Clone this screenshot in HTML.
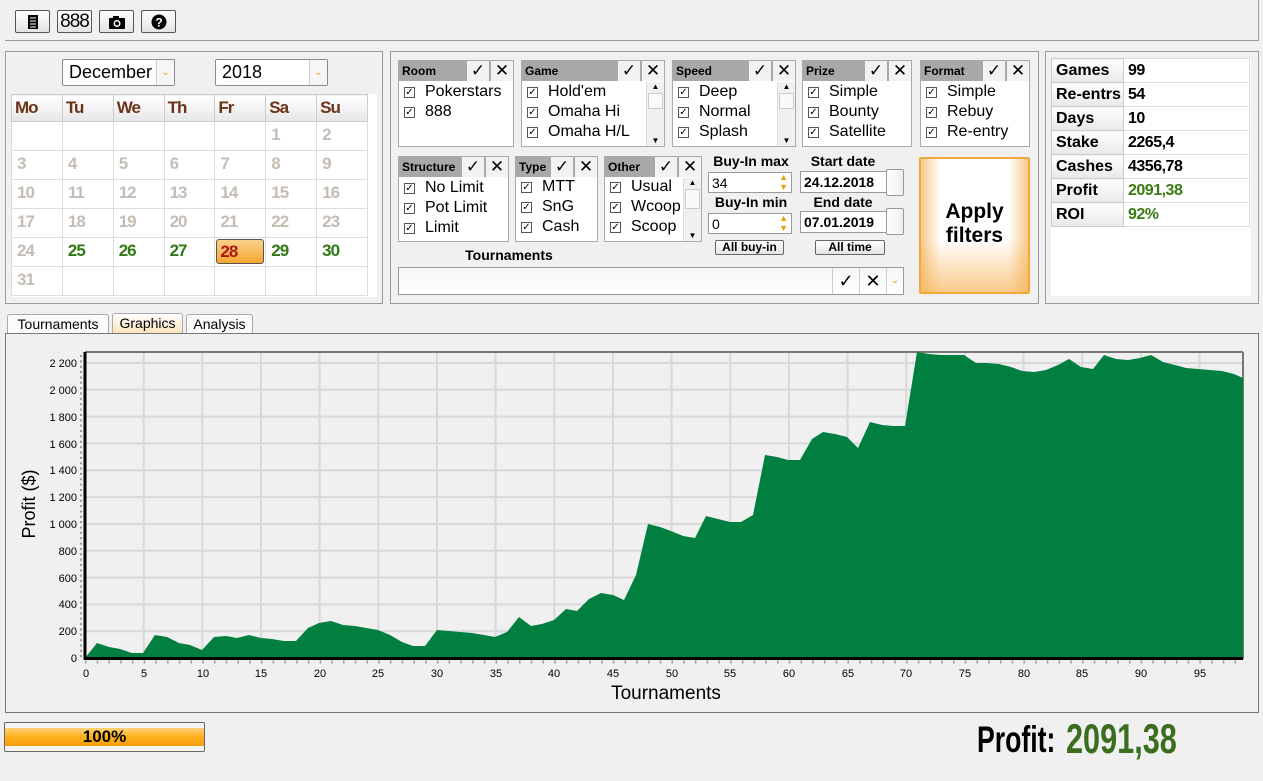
<!DOCTYPE html>
<html><head><meta charset="utf-8">
<style>
*{box-sizing:border-box;margin:0;padding:0}
body{width:1263px;height:781px;background:#f0f0f0;font-family:"Liberation Sans",sans-serif;position:relative;overflow:hidden;color:#000}
.a{position:absolute}
.tb{position:absolute;top:10px;width:35px;height:23px;border:1px solid #555;border-radius:2px;background:linear-gradient(#fff,#e4e4e4);text-align:center;font-size:18px;line-height:21px}
.panel{position:absolute;border:1px solid #9a9a9a}
.combo{position:absolute;height:27px;border:1px solid #8a8a8a;border-radius:2px;background:#fff;font-size:18px;line-height:25px;padding-left:6px}
.combo .dd{position:absolute;right:0;top:0;width:18px;height:25px;border-left:1px solid #ccc;color:#e0a800;font-size:10px;text-align:center;line-height:25px;background:#f6f6f6}
.nar{font-family:"Liberation Sans Narrow","Liberation Sans",sans-serif;font-weight:bold}
.cal td{width:51px;height:29px;border:1px solid #ddd;vertical-align:top;padding:3px 0 0 5px;font-size:17px;letter-spacing:-1px}
.cal th{height:27px;border:1px solid #ccc;background:linear-gradient(#fff,#e6e6e6);text-align:left;padding-left:3px;font-size:17px;color:#6b3318;letter-spacing:-1px}
.g{color:#c4bdb6}.gr{color:#2e7a12}
.fb{position:absolute;border:1px solid #aaa;background:#fff}
.fh{height:20px;background:#a8a8a8;font-size:12px;font-weight:bold;line-height:20px;padding-left:3px;position:relative}
.fh .ck,.fh .x{position:absolute;top:0;width:23px;height:20px;background:#f2f2f2;border-left:1px solid #aaa;text-align:center;font-size:17px;line-height:20px;font-weight:normal}
.it{position:absolute;font-size:16px;line-height:20px;white-space:nowrap}
.cb{display:inline-block;width:11px;height:11px;border:1px solid #555;background:#fff;font-size:10px;line-height:9px;text-align:center;vertical-align:1px;margin-right:10px}
.sb{position:absolute;width:18px;border-left:1px solid #ddd;background:#f0f0f0}
.lbl{position:absolute;font-size:14px;font-weight:bold;text-align:center}
.inp{position:absolute;border:1px solid #999;background:#fff;font-size:14px;line-height:20px;padding-left:3px}
.btn{position:absolute;border:1px solid #666;border-radius:2px;background:linear-gradient(#fff,#e4e4e4);font-size:12px;font-weight:bold;text-align:center;line-height:13px}
.st td{height:24px;border:1px solid #ddd;font-size:16px}
.st td.k{width:72px;background:linear-gradient(#fff,#e8e8e8);font-weight:bold;padding-left:4px;border-color:#ccc}
.st td.v{padding-left:4px;font-family:"Liberation Sans Narrow","Liberation Sans",sans-serif;font-weight:bold;letter-spacing:-0.5px}
.tab{position:absolute;top:314px;height:20px;border:1px solid #aaa;border-bottom:none;border-radius:3px 3px 0 0;background:#fbfbfb;font-size:14px;line-height:19px;text-align:center}
</style></head><body>
<div class="tb" style="left:15px"><svg width="14" height="16" viewBox="0 0 14 16" style="margin-top:3px"><rect x="2" y="1" width="10" height="14" fill="#000"/><g stroke="#fff" stroke-width="1"><line x1="4" y1="4" x2="10" y2="4"/><line x1="4" y1="7" x2="10" y2="7"/><line x1="4" y1="10" x2="10" y2="10"/><line x1="4" y1="13" x2="10" y2="13"/></g></svg></div>
<div class="tb" style="left:57px;font-size:19px;letter-spacing:-1px">888</div>
<div class="tb" style="left:99px"><svg width="18" height="16" viewBox="0 0 18 16" style="margin-top:3px"><rect x="1" y="4" width="16" height="11" rx="1" fill="#000"/><rect x="5" y="2" width="6" height="3" fill="#000"/><circle cx="9" cy="9.5" r="3.5" fill="#fff"/><circle cx="9" cy="9.5" r="2" fill="#000"/></svg></div>
<div class="tb" style="left:141px"><svg width="16" height="16" viewBox="0 0 16 16" style="margin-top:3px"><circle cx="8" cy="8" r="7.5" fill="#000"/><text x="8" y="12.5" font-size="12" font-weight="bold" fill="#fff" text-anchor="middle" font-family="Liberation Sans">?</text></svg></div>
<div class="a" style="left:5px;top:40px;width:1254px;height:1px;background:#999"></div>
<div class="a" style="left:1258px;top:0;width:1px;height:41px;background:#999"></div>

<div class="panel" style="left:5px;top:51px;width:378px;height:253px"></div>
<div class="combo" style="left:62px;top:59px;width:113px">December<div class="dd">&#8964;</div></div>
<div class="combo" style="left:215px;top:59px;width:113px">2018<div class="dd">&#8964;</div></div>
<div class="a" style="left:11px;top:94px;width:366px;height:203px;background:#fff"></div>
<table class="a cal nar" style="left:11px;top:94px;border-collapse:collapse;width:357px">
<tr><th>Mo</th><th>Tu</th><th>We</th><th>Th</th><th>Fr</th><th>Sa</th><th>Su</th></tr>
<tr><td></td><td></td><td></td><td></td><td></td><td class="g">1</td><td class="g">2</td></tr>
<tr><td class="g">3</td><td class="g">4</td><td class="g">5</td><td class="g">6</td><td class="g">7</td><td class="g">8</td><td class="g">9</td></tr>
<tr><td class="g">10</td><td class="g">11</td><td class="g">12</td><td class="g">13</td><td class="g">14</td><td class="g">15</td><td class="g">16</td></tr>
<tr><td class="g">17</td><td class="g">18</td><td class="g">19</td><td class="g">20</td><td class="g">21</td><td class="g">22</td><td class="g">23</td></tr>
<tr><td class="g">24</td><td class="gr">25</td><td class="gr">26</td><td class="gr">27</td><td style="padding:1px"><div style="height:25px;border:1px solid #555;border-radius:3px;background:linear-gradient(#fbd08a,#f5a830);color:#b01818;padding:2px 0 0 3px">28</div></td><td class="gr">29</td><td class="gr">30</td></tr>
<tr><td class="g">31</td><td></td><td></td><td></td><td></td><td></td><td></td></tr>
</table>

<div class="panel" style="left:390px;top:51px;width:649px;height:253px"></div>

<div class="fb" style="left:398px;top:60px;width:116px;height:87px"><div class="fh">Room<span class="ck" style="right:24px">&#10003;</span><span class="x" style="right:0">&#10005;</span></div>
<div class="it" style="left:5px;top:21px"><span class="cb">&#10003;</span>Pokerstars</div><div class="it" style="left:5px;top:41px"><span class="cb">&#10003;</span>888</div></div>

<div class="fb" style="left:521px;top:60px;width:144px;height:87px"><div class="fh">Game<span class="ck" style="right:24px">&#10003;</span><span class="x" style="right:0">&#10005;</span></div>
<div class="it" style="left:5px;top:21px"><span class="cb">&#10003;</span>Hold'em</div><div class="it" style="left:5px;top:41px"><span class="cb">&#10003;</span>Omaha Hi</div><div class="it" style="left:5px;top:61px"><span class="cb">&#10003;</span>Omaha H/L</div>
<div class="sb" style="right:0;top:21px;height:64px"><div style="font-size:8px;text-align:center">&#9650;</div><div style="margin:2px 1px;height:16px;border:1px solid #ccc;background:#fafafa"></div><div style="font-size:8px;text-align:center;position:absolute;bottom:1px;width:100%">&#9660;</div></div></div>

<div class="fb" style="left:672px;top:60px;width:124px;height:87px"><div class="fh">Speed<span class="ck" style="right:24px">&#10003;</span><span class="x" style="right:0">&#10005;</span></div>
<div class="it" style="left:5px;top:21px"><span class="cb">&#10003;</span>Deep</div><div class="it" style="left:5px;top:41px"><span class="cb">&#10003;</span>Normal</div><div class="it" style="left:5px;top:61px"><span class="cb">&#10003;</span>Splash</div>
<div class="sb" style="right:0;top:21px;height:64px"><div style="font-size:8px;text-align:center">&#9650;</div><div style="margin:2px 1px;height:16px;border:1px solid #ccc;background:#fafafa"></div><div style="font-size:8px;text-align:center;position:absolute;bottom:1px;width:100%">&#9660;</div></div></div>

<div class="fb" style="left:802px;top:60px;width:110px;height:87px"><div class="fh">Prize<span class="ck" style="right:24px">&#10003;</span><span class="x" style="right:0">&#10005;</span></div>
<div class="it" style="left:5px;top:21px"><span class="cb">&#10003;</span>Simple</div><div class="it" style="left:5px;top:41px"><span class="cb">&#10003;</span>Bounty</div><div class="it" style="left:5px;top:61px"><span class="cb">&#10003;</span>Satellite</div></div>

<div class="fb" style="left:920px;top:60px;width:110px;height:87px"><div class="fh">Format<span class="ck" style="right:24px">&#10003;</span><span class="x" style="right:0">&#10005;</span></div>
<div class="it" style="left:5px;top:21px"><span class="cb">&#10003;</span>Simple</div><div class="it" style="left:5px;top:41px"><span class="cb">&#10003;</span>Rebuy</div><div class="it" style="left:5px;top:61px"><span class="cb">&#10003;</span>Re-entry</div></div>

<div class="fb" style="left:398px;top:156px;width:111px;height:86px"><div class="fh">Structure<span class="ck" style="right:24px">&#10003;</span><span class="x" style="right:0">&#10005;</span></div>
<div class="it" style="left:5px;top:21px"><span class="cb">&#10003;</span>No Limit</div><div class="it" style="left:5px;top:41px"><span class="cb">&#10003;</span>Pot Limit</div><div class="it" style="left:5px;top:61px"><span class="cb">&#10003;</span>Limit</div></div>

<div class="fb" style="left:515px;top:156px;width:83px;height:86px"><div class="fh">Type<span class="ck" style="right:24px">&#10003;</span><span class="x" style="right:0">&#10005;</span></div>
<div class="it" style="left:5px;top:20px"><span class="cb">&#10003;</span>MTT</div><div class="it" style="left:5px;top:40px"><span class="cb">&#10003;</span>SnG</div><div class="it" style="left:5px;top:60px"><span class="cb">&#10003;</span>Cash</div></div>

<div class="fb" style="left:604px;top:156px;width:98px;height:86px"><div class="fh">Other<span class="ck" style="right:24px">&#10003;</span><span class="x" style="right:0">&#10005;</span></div>
<div class="it" style="left:5px;top:20px"><span class="cb">&#10003;</span>Usual</div><div class="it" style="left:5px;top:40px"><span class="cb">&#10003;</span>Wcoop</div><div class="it" style="left:5px;top:60px"><span class="cb">&#10003;</span>Scoop</div>
<div class="sb" style="right:0;top:21px;height:63px"><div style="font-size:8px;text-align:center">&#9650;</div><div style="margin:2px 1px;height:20px;border:1px solid #ccc;background:#fafafa"></div><div style="font-size:8px;text-align:center;position:absolute;bottom:1px;width:100%">&#9660;</div></div></div>

<div class="lbl" style="left:705px;top:153px;width:92px">Buy-In max</div>
<div class="inp" style="left:708px;top:172px;width:84px;height:21px">34<span style="position:absolute;right:3px;top:-1px;color:#e0a800;font-size:9px;line-height:10px">&#9650;<br>&#9660;</span></div>
<div class="lbl" style="left:705px;top:194px;width:92px">Buy-In min</div>
<div class="inp" style="left:708px;top:213px;width:84px;height:21px">0<span style="position:absolute;right:3px;top:-1px;color:#e0a800;font-size:9px;line-height:10px">&#9650;<br>&#9660;</span></div>
<div class="btn" style="left:715px;top:240px;width:69px;height:15px">All buy-in</div>
<div class="lbl" style="left:798px;top:153px;width:90px">Start date</div>
<div class="inp" style="left:800px;top:171px;width:87px;height:22px;font-weight:bold">24.12.2018</div>
<div class="a" style="left:886px;top:169px;width:18px;height:27px;border:1px solid #999;border-radius:2px;background:linear-gradient(90deg,#fff,#eee)"></div>
<div class="lbl" style="left:798px;top:194px;width:90px">End date</div>
<div class="inp" style="left:800px;top:211px;width:87px;height:22px;font-weight:bold">07.01.2019</div>
<div class="a" style="left:886px;top:208px;width:18px;height:27px;border:1px solid #999;border-radius:2px;background:linear-gradient(90deg,#fff,#eee)"></div>
<div class="btn" style="left:815px;top:240px;width:70px;height:15px">All time</div>

<div class="a" style="left:919px;top:157px;width:111px;height:137px;border:2px solid #f2a93b;border-radius:2px;background:linear-gradient(90deg,#f7c98a 0,#fff 18%,#fff 82%,#f7c98a 100%);"></div>
<div class="a" style="left:921px;top:159px;width:107px;height:133px;background:linear-gradient(rgba(255,255,255,0) 60%,rgba(246,180,90,.7) 100%);"></div>
<div class="a" style="left:919px;top:200px;width:111px;text-align:center;font-size:21px;font-weight:bold;line-height:24px">Apply<br>filters</div>

<div class="lbl" style="left:440px;top:247px;width:138px">Tournaments</div>
<div class="a" style="left:398px;top:267px;width:506px;height:28px;border:1px solid #999;background:linear-gradient(#f6f6f6,#fff)"></div>
<div class="a" style="left:832px;top:268px;width:27px;height:26px;border-left:1px solid #ccc;font-size:18px;text-align:center;line-height:26px">&#10003;</div>
<div class="a" style="left:859px;top:268px;width:27px;height:26px;border-left:1px solid #ccc;font-size:18px;text-align:center;line-height:26px">&#10005;</div>
<div class="a" style="left:886px;top:268px;width:17px;height:26px;border-left:1px solid #ccc;font-size:10px;color:#e0a800;text-align:center;line-height:26px">&#8964;</div>

<div class="panel" style="left:1045px;top:51px;width:214px;height:253px"></div>
<div class="a" style="left:1051px;top:59px;width:200px;height:237px;background:#fff"></div>
<table class="a st" style="left:1051px;top:58px;border-collapse:collapse;width:199px">
<tr><td class="k">Games</td><td class="v">99</td></tr>
<tr><td class="k">Re-entrs</td><td class="v">54</td></tr>
<tr><td class="k">Days</td><td class="v">10</td></tr>
<tr><td class="k">Stake</td><td class="v">2265,4</td></tr>
<tr><td class="k">Cashes</td><td class="v">4356,78</td></tr>
<tr><td class="k">Profit</td><td class="v" style="color:#3a7a12">2091,38</td></tr>
<tr><td class="k">ROI</td><td class="v" style="color:#3a7a12">92%</td></tr>
</table>

<div class="tab" style="left:7px;width:102px">Tournaments</div>
<div class="tab" style="left:112px;width:71px;background:linear-gradient(#fff,#fbe3b8);top:313px;height:21px">Graphics</div>
<div class="tab" style="left:186px;width:67px">Analysis</div>
<div class="a" style="left:5px;top:333px;width:1254px;height:380px;border:1px solid #777"></div>

<svg class="a" style="left:0;top:0" width="1263" height="781" font-family="Liberation Sans" >
<g stroke="#d8d8d8" stroke-width="2">
<line x1="86" x2="1243" y1="631.2" y2="631.2"/><line x1="86" x2="1243" y1="604.4" y2="604.4"/><line x1="86" x2="1243" y1="577.5" y2="577.5"/><line x1="86" x2="1243" y1="550.7" y2="550.7"/><line x1="86" x2="1243" y1="523.9" y2="523.9"/><line x1="86" x2="1243" y1="497.1" y2="497.1"/><line x1="86" x2="1243" y1="470.3" y2="470.3"/><line x1="86" x2="1243" y1="443.4" y2="443.4"/><line x1="86" x2="1243" y1="416.6" y2="416.6"/><line x1="86" x2="1243" y1="389.8" y2="389.8"/><line x1="86" x2="1243" y1="363" y2="363"/>
<line y1="352" y2="658" x1="143.7" x2="143.7"/><line y1="352" y2="658" x1="202.3" x2="202.3"/><line y1="352" y2="658" x1="261" x2="261"/><line y1="352" y2="658" x1="319.6" x2="319.6"/><line y1="352" y2="658" x1="378.3" x2="378.3"/><line y1="352" y2="658" x1="437" x2="437"/><line y1="352" y2="658" x1="495.6" x2="495.6"/><line y1="352" y2="658" x1="554.3" x2="554.3"/><line y1="352" y2="658" x1="612.9" x2="612.9"/><line y1="352" y2="658" x1="671.6" x2="671.6"/><line y1="352" y2="658" x1="730.3" x2="730.3"/><line y1="352" y2="658" x1="788.9" x2="788.9"/><line y1="352" y2="658" x1="847.6" x2="847.6"/><line y1="352" y2="658" x1="906.2" x2="906.2"/><line y1="352" y2="658" x1="964.9" x2="964.9"/><line y1="352" y2="658" x1="1023.6" x2="1023.6"/><line y1="352" y2="658" x1="1082.2" x2="1082.2"/><line y1="352" y2="658" x1="1140.9" x2="1140.9"/><line y1="352" y2="658" x1="1199.5" x2="1199.5"/>
</g>
<line x1="85" x2="1243" y1="352" y2="352" stroke="#777" stroke-width="2"/>
<line x1="1243" x2="1243" y1="352" y2="659" stroke="#777" stroke-width="2"/>
<polygon fill="#017f41" points="85,658 97,643 109,647 120,649 132,653 143,653 155,635 167,637 179,643 190,645 202,650 214,637 226,636 237,638 249,635 261,638 272,639 284,641 296,641 308,628 319,623 331,621 343,625 355,626 366,628 378,630 390,635 402,642 413,646 425,646 437,630 449,631 460,632 472,633 484,635 495,637 507,632 519,617 531,626 542,624 554,620 566,609 577,611 589,599 601,593 613,595 624,600 636,575 648,524 660,527 671,531 683,536 695,538 706,516 718,519 730,522 741,522 753,515 765,455 777,457 788,460 800,460 812,439 823,432 835,434 847,437 858,448 870,422 882,425 893,426 905,426 917,352 929,354 940,355 952,355 964,355 976,363 987,363 999,364 1011,367 1022,371 1034,372 1046,370 1058,365 1069,359 1081,367 1093,369 1104,355 1116,359 1128,360 1140,358 1151,355 1163,362 1175,365 1186,368 1198,369 1210,370 1222,371 1234,374 1243,378 1243,658"/>
<line x1="85" x2="85" y1="352" y2="660" stroke="#000" stroke-width="3"/>
<line x1="84" x2="1243" y1="658.5" y2="658.5" stroke="#000" stroke-width="3"/>
<line x1="81" x2="81" y1="355" y2="658" stroke="#999" stroke-width="2" stroke-dasharray="2 3.36"/>
<line x1="85" x2="1243" y1="662" y2="662" stroke="#999" stroke-width="3" stroke-dasharray="1.5 10.23"/>
<g font-size="11" text-anchor="end" fill="#000">
<text x="77" y="662">0</text><text x="77" y="635">200</text><text x="77" y="608">400</text><text x="77" y="582">600</text><text x="77" y="555">800</text><text x="77" y="528">1 000</text><text x="77" y="501">1 200</text><text x="77" y="474">1 400</text><text x="77" y="448">1 600</text><text x="77" y="421">1 800</text><text x="77" y="394">2 000</text><text x="77" y="367">2 200</text>
</g>
<g font-size="11" text-anchor="middle" fill="#000">
<text x="86" y="677">0</text><text x="144" y="677">5</text><text x="203" y="677">10</text><text x="261" y="677">15</text><text x="320" y="677">20</text><text x="378" y="677">25</text><text x="437" y="677">30</text><text x="496" y="677">35</text><text x="554" y="677">40</text><text x="613" y="677">45</text><text x="672" y="677">50</text><text x="730" y="677">55</text><text x="789" y="677">60</text><text x="848" y="677">65</text><text x="906" y="677">70</text><text x="965" y="677">75</text><text x="1024" y="677">80</text><text x="1082" y="677">85</text><text x="1141" y="677">90</text><text x="1200" y="677">95</text>
</g>
<text x="666" y="699" font-size="19" text-anchor="middle">Tournaments</text>
<text transform="translate(35,504) rotate(-90)" font-size="18" text-anchor="middle">Profit ($)</text>
</svg>

<div class="a" style="left:4px;top:722px;width:201px;height:30px;border:1px solid #666;border-radius:2px;background:#f4f4f4;padding:5px 0"><div style="height:18px;background:linear-gradient(#ffd27a,#ffb01a 50%,#f59e0a);text-align:center;font-weight:bold;font-size:17px;line-height:18px">100%</div></div>

<div class="a nar" style="left:977px;top:719px;font-size:37px;line-height:42px;white-space:nowrap;transform:scaleX(0.72);transform-origin:left">Profit:</div>
<div class="a nar" style="left:1066px;top:716px;font-size:42px;line-height:46px;white-space:nowrap;color:#3a6e1e;transform:scaleX(0.73);transform-origin:left">2091,38</div>
</body></html>
